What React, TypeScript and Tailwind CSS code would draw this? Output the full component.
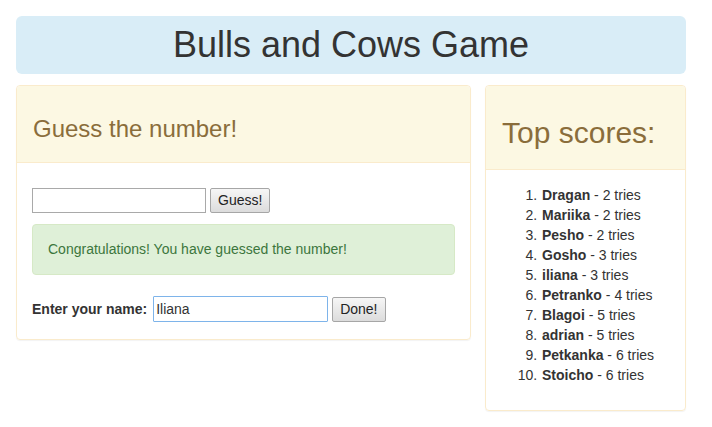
export default function App() {
  const scores = [
    ['Dragan', 2],
    ['Mariika', 2],
    ['Pesho', 2],
    ['Gosho', 3],
    ['iliana', 3],
    ['Petranko', 4],
    ['Blagoi', 5],
    ['adrian', 5],
    ['Petkanka', 6],
    ['Stoicho', 6],
  ] as const

  const btn =
    'h-[25px] px-[7px] text-[14px] text-[#222] border border-[#a6a6a6] rounded-[2px] bg-gradient-to-b from-[#f6f6f6] to-[#dcdcdc]'

  return (
    <div className="w-[712px] h-[427px] bg-white p-4 font-['Liberation_Sans',Arial,sans-serif] text-[14px] text-[#333]">
      <div className="w-[670px] h-[58px] rounded-[6px] bg-[#d9edf7] flex items-center justify-center">
        <h1 className="text-[36px] leading-none text-[#333] whitespace-nowrap">
          Bulls and Cows Game
        </h1>
      </div>

      <div className="flex gap-[14px] mt-[11px] items-start">
        <div className="w-[455px] border border-[#faebcc] rounded-[4px] shadow-[0_1px_1px_rgba(0,0,0,0.05)]">
          <div className="bg-[#fcf8e3] border-b border-[#faebcc] h-[77px] px-4 flex items-center rounded-t-[4px]">
            <h3 className="text-[24px] text-[#8a6d3b] pt-[9px]">Guess the number!</h3>
          </div>
          <div className="px-[15px] pt-[25px] pb-[17px]">
            <div className="flex items-center gap-[4px]">
              <input className="w-[174px] h-[25px] border border-[#a9a9a9] px-1 outline-none" />
              <button className={btn}>Guess!</button>
            </div>
            <div className="mt-[11px] h-[51px] bg-[#dff0d8] border border-[#d6e9c6] rounded-[4px] px-[15px] flex items-center text-[#3c763d]">
              Congratulations! You have guessed the number!
            </div>
            <div className="mt-[21px] flex items-center">
              <span className="font-bold text-[#333] mr-[6px]">Enter your name:</span>
              <input
                defaultValue="Iliana"
                className="w-[175px] h-[26px] border border-[#7eb4ea] rounded-[1px] px-[2px] outline-none text-[14px] text-[#333]"
              />
              <button className={btn + ' ml-[4px]'}>Done!</button>
            </div>
          </div>
        </div>

        <div className="w-[201px] border border-[#faebcc] rounded-[4px] shadow-[0_1px_1px_rgba(0,0,0,0.05)]">
          <div className="bg-[#fcf8e3] border-b border-[#faebcc] h-[84px] px-4 flex items-center rounded-t-[4px]">
            <h2 className="text-[30px] text-[#8a6d3b] pt-[10px]">Top scores:</h2>
          </div>
          <div className="px-[15px] pt-[15px] pb-[25px]">
            <ol className="list-decimal pl-[40px] leading-[20px]">
              {scores.map(([name, tries]) => (
                <li key={name} className="pl-[1px]">
                  <b>{name}</b> - {tries} tries
                </li>
              ))}
            </ol>
          </div>
        </div>
      </div>
    </div>
  )
}
